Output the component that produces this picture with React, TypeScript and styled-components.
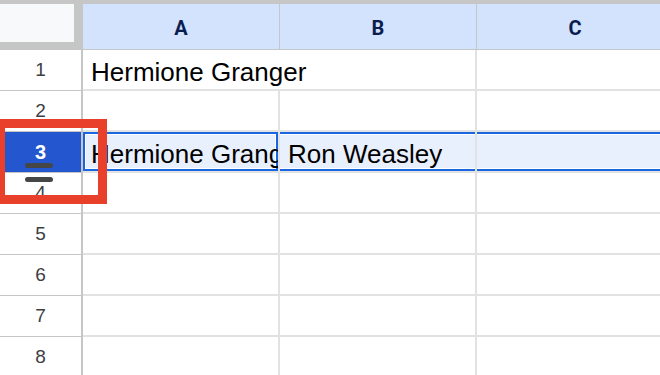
import React from 'react';
import styled, { createGlobalStyle } from 'styled-components';

const GlobalStyle = createGlobalStyle`
  html, body {
    margin: 0;
    padding: 0;
    background: #ffffff;
    overflow: hidden;
  }
  body {
    font-family: "Liberation Sans", Arial, sans-serif;
  }
`;

const Page = styled.div`
  position: relative;
  width: 660px;
  height: 375px;
  overflow: hidden;
  border-top: 4px solid #c6c6c6;
  box-sizing: border-box;
`;

const Sheet = styled.div`
  display: grid;
  grid-template-columns: 83px 197px 197px 197px;
  grid-template-rows: 46px repeat(8, 41px);
`;

const Corner = styled.div`
  background: #f8f9fa;
  border-right: 9px solid #c4c7c5;
  border-bottom: 8px solid #c4c7c5;
`;

const ColHeader = styled.div`
  display: flex;
  align-items: center;
  justify-content: center;
  background: #d3e3fd;
  border-right: 1px solid #c4c7c5;
  border-bottom: 1px solid #c4c7c5;
  color: #0b1d4f;
  font-family: Roboto, "Liberation Sans", sans-serif;
  font-weight: 700;
  font-size: 20px;
  padding-top: 2px;
`;

const RowHeader = styled.div<{ $active?: boolean }>`
  position: relative;
  display: flex;
  align-items: center;
  justify-content: center;
  background: ${(p) => (p.$active ? '#2456cf' : '#ffffff')};
  color: ${(p) => (p.$active ? '#ffffff' : '#3c4043')};
  font-weight: ${(p) => (p.$active ? 700 : 400)};
  font-size: ${(p) => (p.$active ? '20px' : '19px')};
  border-right: 2px solid #c4c7c5;
  border-bottom: 1px solid #c4c7c5;
  box-sizing: border-box;
  z-index: ${(p) => (p.$active ? 2 : 0)};
  overflow: visible;
`;

const Cell = styled.div<{ $span?: number; $selected?: boolean; $active?: boolean }>`
  grid-column: span ${(p) => p.$span ?? 1};
  display: flex;
  align-items: center;
  padding: 5px 0 0 8px;
  box-sizing: border-box;
  overflow: hidden;
  white-space: nowrap;
  font-size: 26px;
  color: #000000;
  background: ${(p) => (p.$selected ? '#e8effd' : '#ffffff')};
  border-right: 2px solid #e2e2e2;
  border-bottom: 2px solid #e2e2e2;
  box-shadow: ${(p) =>
    p.$active
      ? 'inset 0 0 0 2px #1a66e0, inset 0 0 0 3px #ffffff'
      : p.$selected
      ? 'inset 0 2px 0 #1a66e0, inset 0 3px 0 #ffffff, inset 0 -2px 0 #1a66e0, inset 0 -3px 0 #ffffff'
      : 'none'};
`;

const Handle = styled.div`
  position: absolute;
  left: 25px;
  top: 31px;
  width: 28px;
  display: flex;
  flex-direction: column;
  gap: 9px;
`;

const HandleBar = styled.span`
  display: block;
  height: 5px;
  border-radius: 3px;
  background: #444746;
`;

const Callout = styled.div`
  position: absolute;
  left: -4px;
  top: 115px;
  width: 111px;
  height: 85px;
  border: 9px solid #e8402a;
  box-sizing: border-box;
  z-index: 5;
`;

const columns = ['A', 'B', 'C'];

export default function App() {
  return (
    <>
      <GlobalStyle />
      <Page>
        <Sheet>
          <Corner />
          {columns.map((c) => (
            <ColHeader key={c}>{c}</ColHeader>
          ))}

          <RowHeader>1</RowHeader>
          <Cell $span={2}>Hermione Granger</Cell>
          <Cell />

          <RowHeader>2</RowHeader>
          <Cell />
          <Cell />
          <Cell />

          <RowHeader $active>
            3
            <Handle>
              <HandleBar />
              <HandleBar />
            </Handle>
          </RowHeader>
          <Cell $selected $active>Hermione Granger</Cell>
          <Cell $selected>Ron Weasley</Cell>
          <Cell $selected />

          {[4, 5, 6, 7, 8].map((n) => (
            <React.Fragment key={n}>
              <RowHeader>{n}</RowHeader>
              <Cell />
              <Cell />
              <Cell />
            </React.Fragment>
          ))}
        </Sheet>
        <Callout />
      </Page>
    </>
  );
}
